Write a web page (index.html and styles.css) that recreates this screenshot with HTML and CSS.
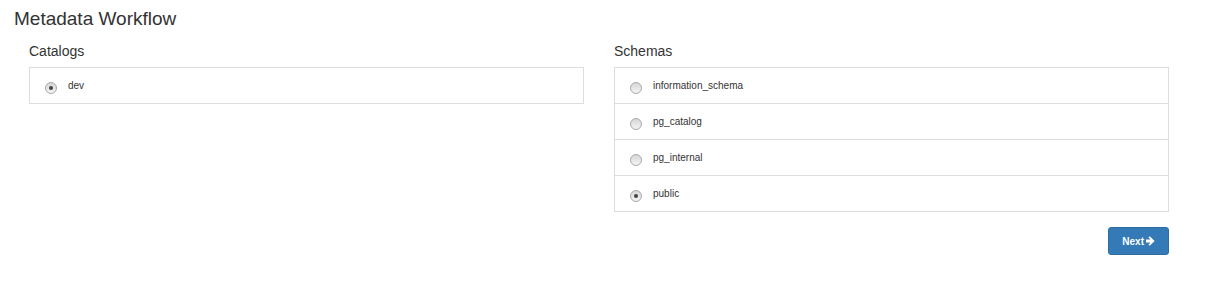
FILE: index.html
```html
<!DOCTYPE html>
<html lang="en">
<head>
    <meta charset="UTF-8">
    <meta name="viewport" content="width=device-width, initial-scale=1.0">
    <title>Metadata Workflow</title>
    <link rel="stylesheet" href="styles.css">
</head>
<body>
    <div class="page">
        <h1>Metadata Workflow</h1>

        <div class="columns">
            <!-- Catalogs -->
            <div class="column">
                <h2>Catalogs</h2>
                <div class="list">
                    <label class="item">
                        <span class="radio checked"></span>
                        <span class="item-text">dev</span>
                    </label>
                </div>
            </div>

            <!-- Schemas -->
            <div class="column">
                <h2>Schemas</h2>
                <div class="list">
                    <label class="item">
                        <span class="radio"></span>
                        <span class="item-text">information_schema</span>
                    </label>
                    <label class="item">
                        <span class="radio"></span>
                        <span class="item-text">pg_catalog</span>
                    </label>
                    <label class="item">
                        <span class="radio"></span>
                        <span class="item-text">pg_internal</span>
                    </label>
                    <label class="item">
                        <span class="radio checked"></span>
                        <span class="item-text">public</span>
                    </label>
                </div>

                <div class="actions">
                    <button class="next-btn">Next<svg class="arrow" viewBox="0 0 10 10" width="10" height="10"><path d="M0 3.6 H4.6 L2.4 1.4 L3.7 0.2 L8.6 5 L3.7 9.8 L2.4 8.6 L4.6 6.4 H0 Z" fill="#fff"/></svg></button>
                </div>
            </div>
        </div>
    </div>
</body>
</html>
```

FILE: styles.css
```css
body {
    margin: 0;
    background-color: #fff;
    color: #333;
    font-family: "Liberation Sans", Arial, sans-serif;
}

.page {
    padding: 0 25px 0 14px;
}

h1 {
    margin: 8px 0 0;
    font-size: 19px;
    line-height: 21px;
    font-weight: normal;
}

.columns {
    display: grid;
    grid-template-columns: 1fr 1fr;
    column-gap: 30px;
    padding: 0 15px;
    margin-top: 12px;
}

h2 {
    margin: 0 0 6px;
    font-size: 14px;
    line-height: 20px;
    font-weight: normal;
}

.list {
    border-bottom: 1px solid #ddd;
}

.item {
    display: flex;
    align-items: flex-start;
    height: 15px;
    padding: 10px 15px;
    border: 1px solid #ddd;
    border-bottom: none;
    font-size: 10px;
    line-height: 15px;
    cursor: pointer;
}

.radio {
    box-sizing: border-box;
    width: 12px;
    height: 12px;
    margin: 4px 11px 0 0;
    border: 1px solid #a9a9a9;
    border-radius: 50%;
    background: linear-gradient(#d6d6d6, #f4f4f4);
    display: flex;
    align-items: center;
    justify-content: center;
    flex-shrink: 0;
}

.radio.checked::after {
    content: "";
    width: 4px;
    height: 4px;
    border-radius: 50%;
    background-color: #444;
}

.actions {
    display: flex;
    justify-content: flex-end;
    margin-top: 15px;
}

.next-btn {
    display: flex;
    align-items: center;
    gap: 2px;
    height: 28px;
    padding: 0 12px 0 13px;
    background-color: #337ab7;
    border: 1px solid #2e6da4;
    border-radius: 3px;
    color: #fff;
    font-family: "Liberation Sans", Arial, sans-serif;
    font-size: 10px;
    font-weight: bold;
    cursor: pointer;
}

.next-btn:hover {
    background-color: #286090;
}

.arrow {
    display: block;
}
```
